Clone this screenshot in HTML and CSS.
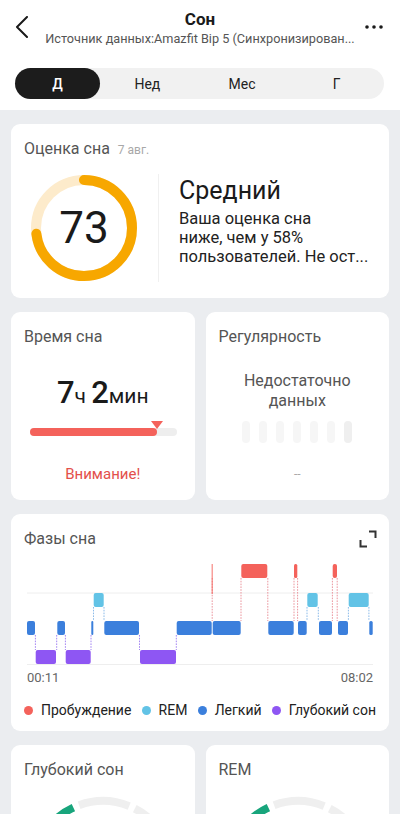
FILE: index.html
```
<!DOCTYPE html>
<html lang="ru">
<head>
  <meta charset="UTF-8">
  <meta name="viewport" content="width=device-width, initial-scale=1.0">
  <title>Сон</title>
  <link rel="stylesheet" href="styles.css">
</head>
<body>
  <header class="top">
    <div class="top-bar">
      <button class="icon-btn back" aria-label="Назад">
        <svg width="14" height="22" viewBox="0 0 14 22"><path d="M12 1 L2 11 L12 21" fill="none" stroke="#1a1a1a" stroke-width="2" stroke-linecap="round" stroke-linejoin="round"/></svg>
      </button>
      <div class="top-title">
        <h1>Сон</h1>
        <p>Источник данных:Amazfit Bip 5 (Синхронизирован...</p>
      </div>
      <button class="icon-btn more" aria-label="Ещё">
        <svg width="18" height="4" viewBox="0 0 18 4"><circle cx="2" cy="2" r="1.8" fill="#1a1a1a"/><circle cx="9" cy="2" r="1.8" fill="#1a1a1a"/><circle cx="16" cy="2" r="1.8" fill="#1a1a1a"/></svg>
      </button>
    </div>
    <nav class="tabs">
      <a href="#" class="tab active">Д</a>
      <a href="#" class="tab">Нед</a>
      <a href="#" class="tab">Мес</a>
      <a href="#" class="tab">Г</a>
    </nav>
  </header>

  <main class="content">
    <section class="card score-card">
      <div class="card-title">Оценка сна <span class="date">7 авг.</span></div>
      <div class="score-body">
        <div class="ring">
          <svg width="108" height="108" viewBox="0 0 108 108">
            <circle cx="54" cy="54" r="48" fill="none" stroke="#fdebcb" stroke-width="10"/>
            <circle cx="54" cy="54" r="48" fill="none" stroke="#f7a700" stroke-width="10" stroke-linecap="round"
                    stroke-dasharray="220 302" transform="rotate(-90 54 54)"/>
          </svg>
          <span class="ring-value">73</span>
        </div>
        <div class="score-text">
          <div class="score-level">Средний</div>
          <p class="score-desc">
            <span>Ваша оценка сна</span>
            <span>ниже, чем у 58%</span>
            <span>пользователей. Не ост...</span>
          </p>
        </div>
      </div>
    </section>

    <div class="row">
      <section class="card half">
        <div class="card-title">Время сна</div>
        <div class="duration"><b>7</b>ч <b>2</b>мин</div>
        <div class="dur-bar">
          <div class="dur-fill" style="width: 87%"></div>
          <span class="dur-mark" style="left: 87%"></span>
        </div>
        <div class="warn">Внимание!</div>
      </section>

      <section class="card half">
        <div class="card-title">Регулярность</div>
        <div class="no-data">Недостаточно<br>данных</div>
        <div class="pills">
          <span></span><span></span><span></span><span></span><span></span><span></span><span class="last"></span>
        </div>
        <div class="dash">--</div>
      </section>
    </div>

    <section class="card phases">
      <div class="card-title">
        Фазы сна
        <svg class="expand" width="18" height="18" viewBox="0 0 18 18"><path d="M10 1.5 H16.5 V8 M1.5 10 V16.5 H8" fill="none" stroke="#333" stroke-width="2"/></svg>
      </div>
      <svg class="chart" width="346" height="110" viewBox="0 0 346 110">
        <line x1="0" y1="36" x2="346" y2="36" stroke="#eeeeee"/>
        <line x1="0" y1="107.5" x2="346" y2="107.5" stroke="#eeeeee"/>

        <g stroke-width="0.9" stroke-dasharray="1.6 1.2" fill="none">
          <line x1="8.4" y1="78" x2="8.4" y2="93" stroke="#9a78f0"/>
          <line x1="29.7" y1="78" x2="29.7" y2="93" stroke="#9a78f0"/>
          <line x1="38.4" y1="78" x2="38.4" y2="93" stroke="#9a78f0"/>
          <line x1="64" y1="78" x2="64" y2="93" stroke="#9a78f0"/>
          <line x1="66.5" y1="50" x2="66.5" y2="64" stroke="#7fb3e6"/>
          <line x1="77" y1="50" x2="77" y2="64" stroke="#7fb3e6"/>
          <line x1="112.5" y1="78" x2="112.5" y2="93" stroke="#9a78f0"/>
          <line x1="149.3" y1="78" x2="149.3" y2="93" stroke="#9a78f0"/>
          <line x1="185.2" y1="21" x2="185.2" y2="64" stroke="#e98a93"/>
          <line x1="214" y1="21" x2="214" y2="64" stroke="#e98a93"/>
          <line x1="240.8" y1="21" x2="240.8" y2="64" stroke="#e98a93"/>
          <line x1="267" y1="21" x2="267" y2="64" stroke="#e98a93"/>
          <line x1="270.6" y1="21" x2="270.6" y2="64" stroke="#e98a93"/>
          <line x1="280" y1="50" x2="280" y2="64" stroke="#7fb3e6"/>
          <line x1="291.3" y1="50" x2="291.3" y2="64" stroke="#7fb3e6"/>
          <line x1="305.4" y1="21" x2="305.4" y2="64" stroke="#e98a93"/>
          <line x1="310.2" y1="21" x2="310.2" y2="64" stroke="#e98a93"/>
          <line x1="321.4" y1="50" x2="321.4" y2="64" stroke="#7fb3e6"/>
          <line x1="341.9" y1="50" x2="341.9" y2="64" stroke="#7fb3e6"/>
        </g>

        <g fill="#3b7fdc">
          <rect x="0" y="64" width="8" height="14" rx="2"/>
          <rect x="30.3" y="64" width="7.7" height="14" rx="2"/>
          <rect x="64.3" y="64" width="2" height="14" rx="1"/>
          <rect x="77.3" y="64" width="34.7" height="14" rx="2"/>
          <rect x="149.7" y="64" width="35" height="14" rx="2"/>
          <rect x="185.7" y="64" width="28" height="14" rx="2"/>
          <rect x="241.3" y="64" width="25.4" height="14" rx="2"/>
          <rect x="271" y="64" width="8.7" height="14" rx="2"/>
          <rect x="292" y="64" width="13" height="14" rx="2"/>
          <rect x="311" y="64" width="10" height="14" rx="2"/>
          <rect x="342.3" y="64" width="3.4" height="14" rx="1.5"/>
        </g>
        <g fill="#8e56f3">
          <rect x="8.7" y="93" width="20.3" height="14" rx="2"/>
          <rect x="38.7" y="93" width="25" height="14" rx="2"/>
          <rect x="113" y="93" width="36" height="14" rx="2"/>
        </g>
        <g fill="#62c3e6">
          <rect x="66.7" y="36" width="10" height="14" rx="2"/>
          <rect x="280.3" y="36" width="10.4" height="14" rx="2"/>
          <rect x="321.7" y="36" width="20" height="14" rx="2"/>
        </g>
        <g fill="#f4625b">
          <rect x="184.7" y="7" width="0.9" height="30"/>
          <rect x="214.3" y="7" width="26" height="14" rx="2"/>
          <rect x="267" y="7" width="3.3" height="14" rx="1.5"/>
          <rect x="305.7" y="7" width="4.3" height="14" rx="2"/>
        </g>
      </svg>
      <div class="chart-axis"><span>00:11</span><span>08:02</span></div>
      <ul class="legend">
        <li><i class="dot awake"></i>Пробуждение</li>
        <li><i class="dot rem"></i>REM</li>
        <li><i class="dot light"></i>Легкий</li>
        <li><i class="dot deep"></i>Глубокий сон</li>
      </ul>
    </section>

    <div class="row">
      <section class="card half gauge-card">
        <div class="card-title">Глубокий сон</div>
        <svg class="gauge" width="183" height="150" viewBox="0 0 183 150">
          <path d="M42.5 127.5 A70 70 0 0 1 62.4 14.6" fill="none" stroke="#18a57c" stroke-width="8"/>
          <path d="M68.1 12.2 A70 70 0 0 1 118.2 13.1" fill="none" stroke="#efefef" stroke-width="8"/>
          <path d="M123.8 15.6 A70 70 0 0 1 141.5 127.5" fill="none" stroke="#efefef" stroke-width="8"/>
        </svg>
      </section>
      <section class="card half gauge-card">
        <div class="card-title">REM</div>
        <svg class="gauge" width="183" height="150" viewBox="0 0 183 150">
          <path d="M42.5 127.5 A70 70 0 0 1 62.4 14.6" fill="none" stroke="#18a57c" stroke-width="8"/>
          <path d="M68.1 12.2 A70 70 0 0 1 118.2 13.1" fill="none" stroke="#efefef" stroke-width="8"/>
          <path d="M123.8 15.6 A70 70 0 0 1 141.5 127.5" fill="none" stroke="#efefef" stroke-width="8"/>
        </svg>
      </section>
    </div>
  </main>
</body>
</html>
```

FILE: styles.css
```
:root {
  --bg: #ebedf0;
  --text: #1a1a1a;
  --muted: #555;
  --radius: 9px;
  --awake: #f4625b;
  --rem: #62c3e6;
  --light: #3b7fdc;
  --deep: #8e56f3;
}

* {
  box-sizing: border-box;
}

html, body {
  margin: 0;
  padding: 0;
}

body {
  font-family: Roboto, 'Noto Sans', sans-serif;
  color: var(--text);
  background: var(--bg);
  width: 400px;
  height: 814px;
  overflow: hidden;
}

/* шапка */
.top {
  background: white;
  padding: 8px 15px 11px;
  height: 110px;
}

.top-bar {
  display: flex;
  align-items: flex-start;
}

.icon-btn {
  background: none;
  border: none;
  padding: 0;
  display: flex;
}

.back {
  width: 30px;
  padding-top: 8px;
}

.more {
  width: 30px;
  justify-content: flex-end;
  padding-top: 17px;
  padding-right: 2px;
}

.top-title {
  flex: 1;
  text-align: center;
}

.top-title h1 {
  margin: 0;
  font-size: 17px;
  line-height: 22px;
  font-weight: 700;
}

.top-title p {
  margin: 0;
  font-size: 12.7px;
  line-height: 18px;
  color: var(--muted);
  white-space: nowrap;
}

.tabs {
  display: flex;
  margin-top: 20px;
  margin-right: 1px;
  height: 31px;
  background: #f1f1f1;
  border-radius: 16px;
}

.tab {
  flex: 1;
  display: flex;
  align-items: center;
  justify-content: center;
  font-size: 14px;
  color: #222;
  text-decoration: none;
  border-radius: 16px;
}

.tab.active {
  flex: 0 0 85px;
  background: #1c1c1c;
  color: white;
  font-weight: 500;
}

/* карточки */
.content {
  display: flex;
  flex-direction: column;
  gap: 14px;
  padding: 14px 11px;
}

.card {
  background: white;
  border-radius: var(--radius);
  padding: 14px 13px;
}

.card-title {
  font-size: 16px;
  line-height: 22px;
  color: var(--muted);
  display: flex;
  align-items: baseline;
  gap: 8px;
}

.card-title .date {
  font-size: 12px;
  color: #a8a8a8;
}

.row {
  display: flex;
  gap: 11px;
}

.half {
  flex: 1;
  height: 188px;
}

/* оценка сна */
.score-card {
  padding-bottom: 16px;
}

.score-body {
  display: flex;
  align-items: center;
  margin-top: 13px;
}

.ring {
  position: relative;
  width: 108px;
  height: 108px;
  margin-left: 6px;
}

.ring svg {
  display: block;
}

.ring-value {
  position: absolute;
  inset: 0;
  display: flex;
  align-items: center;
  justify-content: center;
  font-size: 44px;
  color: #1a1a1a;
}

.score-text {
  flex: 1;
  min-width: 0;
  margin-left: 20px;
  padding-left: 20px;
  border-left: 1px solid #f0f0f0;
  height: 108px;
  padding-top: 2px;
}

.score-level {
  font-size: 25px;
  line-height: 30px;
  color: #1a1a1a;
}

.score-desc {
  margin: 3px 0 0;
  font-size: 16.5px;
  line-height: 19px;
  color: #222;
}

.score-desc span {
  display: block;
  white-space: nowrap;
}

/* время сна */
.duration {
  margin-top: 27px;
  text-align: center;
  font-size: 21px;
  line-height: 36px;
}

.duration b {
  font-size: 31px;
  font-weight: 500;
}

.dur-bar {
  position: relative;
  height: 8px;
  margin: 14px 5px 0 6px;
  background: #eeeeee;
  border-radius: 4px;
}

.dur-fill {
  height: 100%;
  background: var(--awake);
  border-radius: 4px;
}

.dur-mark {
  position: absolute;
  top: -7px;
  margin-left: -6px;
  width: 0;
  height: 0;
  border-left: 6px solid transparent;
  border-right: 6px solid transparent;
  border-top: 8px solid var(--awake);
}

.warn {
  margin-top: 28px;
  text-align: center;
  font-size: 15px;
  line-height: 20px;
  color: #e3504b;
}

/* регулярность */
.no-data {
  margin-top: 23px;
  text-align: center;
  font-size: 16px;
  line-height: 20px;
  color: var(--muted);
}

.pills {
  display: flex;
  justify-content: center;
  gap: 9px;
  margin-top: 10px;
}

.pills span {
  width: 8px;
  height: 22px;
  border-radius: 4px;
  background: #f6f6f6;
}

.pills span.last {
  background: #efefef;
}

.dash {
  margin-top: 23px;
  text-align: center;
  font-size: 12px;
  line-height: 16px;
  color: #aaa;
}

/* фазы сна */
.phases {
  padding-bottom: 11px;
}

.phases .card-title {
  justify-content: space-between;
  align-items: center;
}

.expand {
  margin-right: -1px;
}

.chart {
  display: block;
  margin: 7px 3px 0;
}

.chart-axis {
  display: flex;
  justify-content: space-between;
  margin: 3px 3px 0;
  font-size: 13px;
  line-height: 16px;
  color: #666;
}

.legend {
  list-style: none;
  margin: 14px 0 0;
  padding: 0;
  display: flex;
  justify-content: space-between;
  font-size: 14px;
  line-height: 20px;
  color: #222;
}

.legend li {
  display: flex;
  align-items: center;
  gap: 8px;
}

.dot {
  width: 9px;
  height: 9px;
  border-radius: 50%;
}

.dot.awake { background: var(--awake); }
.dot.rem { background: var(--rem); }
.dot.light { background: var(--light); }
.dot.deep { background: var(--deep); }

/* датчики */
.gauge-card {
  padding-left: 0;
  padding-right: 0;
}

.gauge-card .card-title {
  padding: 0 13px;
}

.gauge {
  display: block;
  margin-top: 12px;
}
```
